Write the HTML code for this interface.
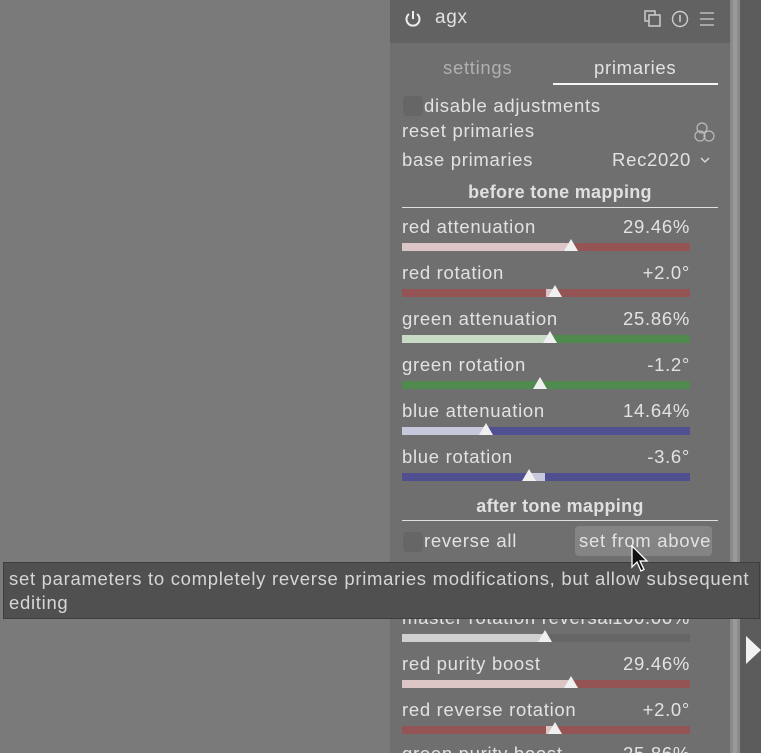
<!DOCTYPE html>
<html style="overflow:hidden;width:761px;height:753px"><head><style>
*{margin:0;padding:0;box-sizing:border-box}
body{width:761px;height:753px;overflow:hidden;background:#7a7a7a;font-family:"Liberation Sans",sans-serif;color:#dcdcdc;position:relative}
.abs{position:absolute}
.panel{left:390px;top:0;width:340px;height:753px;background:#6f6f6f}
.hdr{left:390px;top:0;width:340px;height:43px;background:#626262}
.lbl{position:absolute;font-size:18.5px;letter-spacing:0.7px;white-space:nowrap;color:#e2e2e2}
.val{position:absolute;font-size:18.5px;letter-spacing:0.7px;right:71px;white-space:nowrap;color:#e2e2e2}
.bar{position:absolute;left:402px;width:288px;height:8px}
.tri{position:absolute;width:0;height:0;border-left:7px solid transparent;border-right:7px solid transparent;border-bottom:12px solid #f0f0f0}
.sec{position:absolute;left:402px;width:316px;text-align:center;font-weight:bold;font-size:18px;letter-spacing:0.3px;color:#e0e0e0}
.cb{position:absolute;width:20px;height:20px;border-radius:4px;background:#666}
</style></head><body>
<div class="abs panel"></div>
<div class="abs hdr"></div>
<div class="abs" style="left:730px;top:0;width:10px;height:753px;background:#8a8a8a"></div>
<div class="abs" style="left:733px;top:0;width:4px;height:753px;background:#9a9a9a"></div>
<div class="abs" style="left:740px;top:0;width:21px;height:753px;background:#5c5c5c"></div>
<div class="abs" style="left:746px;top:636px;width:0;height:0;border-top:14px solid transparent;border-bottom:14px solid transparent;border-left:15px solid #f2f2f2"></div>

<svg class="abs" style="left:403px;top:9px" width="20" height="20" viewBox="0 0 20 20"><path d="M6 5A6.5 6.5 0 1 0 14 5" fill="none" stroke="#eee" stroke-width="2"/><line x1="10" y1="2" x2="10" y2="10" stroke="#eee" stroke-width="2"/></svg>
<div class="lbl" style="left:435px;top:7px;font-size:19px">agx</div>
<svg class="abs" style="left:644px;top:10px" width="75" height="18" viewBox="0 0 75 18"><rect x="1" y="1" width="10" height="10" fill="none" stroke="#ccc" stroke-width="1.5"/><rect x="5" y="5" width="11" height="11" fill="#626262" stroke="#ccc" stroke-width="1.5"/><circle cx="36" cy="9" r="7.5" fill="none" stroke="#ccc" stroke-width="1.4"/><line x1="36" y1="5" x2="36" y2="12" stroke="#ccc" stroke-width="1.6"/><line x1="56" y1="3" x2="70" y2="3" stroke="#ccc" stroke-width="1.3"/><line x1="56" y1="9" x2="70" y2="9" stroke="#ccc" stroke-width="1.3"/><line x1="56" y1="15" x2="70" y2="15" stroke="#ccc" stroke-width="1.3"/></svg>

<div class="lbl" style="left:443px;top:57px;color:#b0b0b0">settings</div>
<div class="lbl" style="left:594px;top:57px">primaries</div>
<div class="abs" style="left:553px;top:83px;width:165px;height:2px;background:#f5f5f5"></div>

<div class="cb" style="left:403px;top:96px"></div>
<div class="lbl" style="left:424px;top:95px">disable adjustments</div>
<div class="lbl" style="left:402px;top:120px">reset primaries</div>
<svg class="abs" style="left:694px;top:121px" width="22" height="22" viewBox="0 0 22 22"><circle cx="8" cy="7" r="5" fill="none" stroke="#bbb" stroke-width="1.2"/><circle cx="6" cy="15" r="5" fill="none" stroke="#bbb" stroke-width="1.2"/><circle cx="15" cy="15" r="5" fill="none" stroke="#bbb" stroke-width="1.2"/></svg>
<div class="lbl" style="left:402px;top:149px">base primaries</div>
<div class="val" style="top:149px;right:70px">Rec2020</div>
<svg class="abs" style="left:700px;top:156px" width="10" height="8"><path d="M1 2l4 4 4-4" fill="none" stroke="#ddd" stroke-width="1.3"/></svg>

<div class="sec" style="top:182px">before tone mapping</div>
<div class="abs" style="left:402px;top:207px;width:316px;height:1px;background:#e0e0e0"></div>

<div class="lbl" style="left:402px;top:216px">red attenuation</div><div class="val" style="top:216px">29.46%</div>
<div class="bar" style="top:243px;background:#945454"></div><div class="bar" style="top:243px;width:169px;background:#dcc5c5"></div><div class="tri" style="left:564px;top:239px"></div>

<div class="lbl" style="left:402px;top:262px">red rotation</div><div class="val" style="top:262px">+2.0°</div>
<div class="bar" style="top:289px;background:#945454"></div><div class="abs" style="left:546px;top:289px;width:9px;height:8px;background:#dcc5c5"></div><div class="tri" style="left:548px;top:285px"></div>

<div class="lbl" style="left:402px;top:308px">green attenuation</div><div class="val" style="top:308px">25.86%</div>
<div class="bar" style="top:335px;background:#4f8a4f"></div><div class="bar" style="top:335px;width:148px;background:#c8dcc5"></div><div class="tri" style="left:543px;top:331px"></div>

<div class="lbl" style="left:402px;top:354px">green rotation</div><div class="val" style="top:354px">-1.2°</div>
<div class="bar" style="top:381px;background:#4f8a4f"></div><div class="tri" style="left:533px;top:377px"></div>

<div class="lbl" style="left:402px;top:400px">blue attenuation</div><div class="val" style="top:400px">14.64%</div>
<div class="bar" style="top:427px;background:#505090"></div><div class="bar" style="top:427px;width:84px;background:#c8c8dc"></div><div class="tri" style="left:479px;top:423px"></div>

<div class="lbl" style="left:402px;top:446px">blue rotation</div><div class="val" style="top:446px">-3.6°</div>
<div class="bar" style="top:473px;background:#505090"></div><div class="abs" style="left:530px;top:473px;width:15px;height:8px;background:#c8c8dc"></div><div class="tri" style="left:522px;top:469px"></div>

<div class="sec" style="top:496px">after tone mapping</div>
<div class="abs" style="left:402px;top:520px;width:316px;height:1px;background:#e0e0e0"></div>
<div class="cb" style="left:403px;top:532px"></div>
<div class="lbl" style="left:424px;top:530px">reverse all</div>
<div class="abs" style="left:575px;top:526px;width:137px;height:30px;border-radius:4px;background:#848484"></div>
<div class="lbl" style="left:579px;top:530px">set from above</div>

<div class="lbl" style="left:402px;top:607px">master rotation reversal</div><div class="val" style="top:607px">100.00%</div>
<div class="bar" style="top:634px;background:#666"></div><div class="bar" style="top:634px;width:143px;background:#d0d0d0"></div><div class="tri" style="left:538px;top:630px"></div>

<div class="lbl" style="left:402px;top:653px">red purity boost</div><div class="val" style="top:653px">29.46%</div>
<div class="bar" style="top:680px;background:#945454"></div><div class="bar" style="top:680px;width:169px;background:#dcc5c5"></div><div class="tri" style="left:564px;top:676px"></div>

<div class="lbl" style="left:402px;top:699px">red reverse rotation</div><div class="val" style="top:699px">+2.0°</div>
<div class="bar" style="top:726px;background:#945454"></div><div class="abs" style="left:546px;top:726px;width:9px;height:8px;background:#dcc5c5"></div><div class="tri" style="left:548px;top:722px"></div>
<div class="lbl" style="left:402px;top:743px">green purity boost</div><div class="val" style="top:743px">25.86%</div>

<div class="abs" style="left:3px;top:562px;width:757px;height:57px;background:#505050;border:1px solid #3e3e3e"></div>
<div class="lbl" style="left:9px;top:568px;color:#d6d6d6">set parameters to completely reverse primaries modifications, but allow subsequent</div>
<div class="lbl" style="left:9px;top:592px;color:#d6d6d6">editing</div>

<svg class="abs" style="left:630px;top:545px" width="22" height="30" viewBox="0 0 22 30"><path d="M2 1L2 22L7 17L11 26L14 24.5L10 16L17 16Z" fill="#111" stroke="#fff" stroke-width="1.3"/></svg>
</body></html>
